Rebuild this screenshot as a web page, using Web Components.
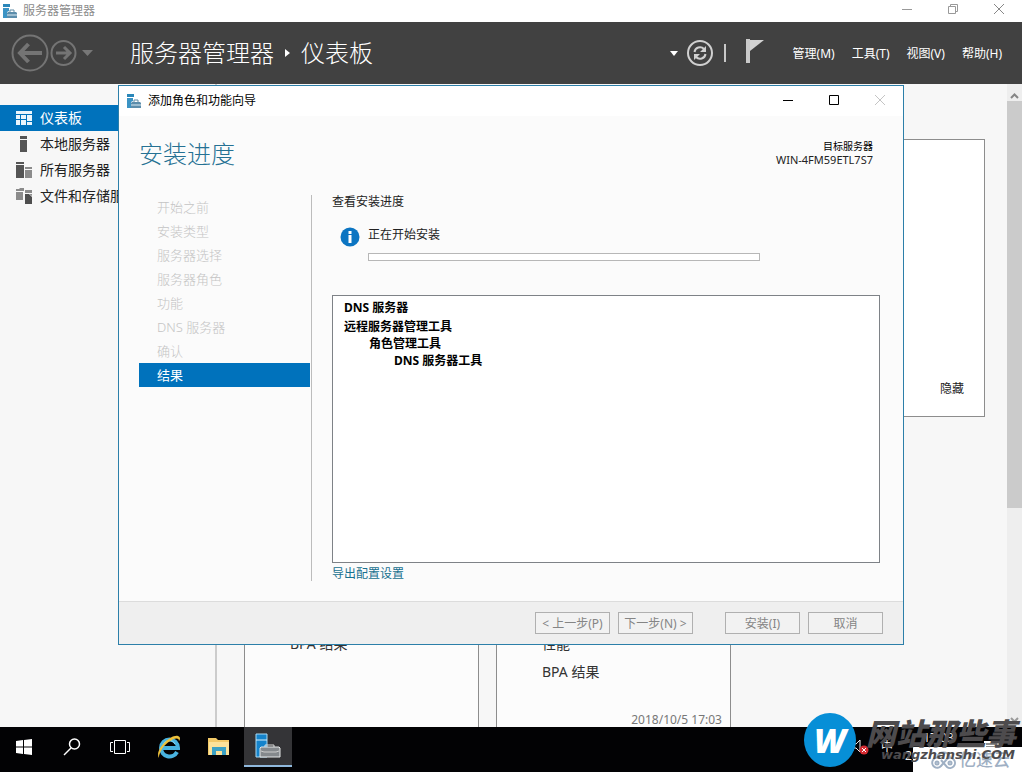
<!DOCTYPE html>
<html lang="zh-CN">
<head>
<meta charset="utf-8">
<title>服务器管理器</title>
<style>
html,body{margin:0;height:100%}
body{position:relative;display:flex;flex-direction:column;overflow:hidden;background:#f7f7f7;color:#222;font:12px/16px "Noto Sans","Noto Sans CJK SC",sans-serif}
</style>
</head>
<body>
<sm-titlebar>服务器管理器</sm-titlebar>
<sm-header></sm-header>
<sm-workspace></sm-workspace>
<sm-taskbar></sm-taskbar>
<sm-wizard></sm-wizard>
<site-mark></site-mark>
<script>
const base = `<style>:host,*{box-sizing:border-box}button{font:inherit;color:inherit;background:none;border:0;padding:0;margin:0}a{color:inherit;text-decoration:none}ul,ol{list-style:none;margin:0;padding:0}h1,h2,p{margin:0;font-weight:inherit;font-size:inherit}svg{display:block}</style>`;
function define(name, html){
  const t = document.createElement('template');
  t.innerHTML = base + html;
  customElements.define(name, class extends HTMLElement{
    constructor(){super();this.attachShadow({mode:'open'}).append(t.content.cloneNode(true));}
  });
}

define('app-glyph', `<style>:host{display:block}</style>
<svg width="15" height="15" viewBox="0 0 15 15" aria-hidden="true"><path d="M0 0h7v3H0z" fill="#2b87b9"/><path d="M0 4h6v3l-2 1v6H0z" fill="#3b93c4"/><path d="M7 8V6h4v2" fill="none" stroke="#5f8ba5"/><path d="M4 9l1-1h8l1 1v5H4z" fill="#5c8dab"/><path d="M4 11h10" stroke="#dcecf4"/></svg>`);

define('sm-titlebar', `<style>
:host{display:flex;flex:none;height:22px;align-items:center;background:#fff;color:#8c8c8c;padding-left:3px}
p{flex:1;margin-left:5px;line-height:20px}
.c{display:flex;gap:34px;padding:0 17px 4px 0}
</style><app-glyph></app-glyph><p><slot></slot></p>
<div class="c">
<button aria-label="最小化"><svg width="12" height="12"><path d="M1 6.500h10" stroke="#999"/></svg></button>
<button aria-label="还原"><svg width="12" height="12" fill="none" stroke="#999"><path d="M1.500 3.500h7v7h-7zM3.500 3.500v-2h7v7h-2"/></svg></button>
<button aria-label="关闭"><svg width="12" height="12"><path d="M1 1l10 10M11 1L1 11" stroke="#888"/></svg></button></div>`);

define('sm-header', `<style>
:host{display:flex;flex:none;height:62px;align-items:center;background:#414141;color:#fff;padding:0 20px 0 11px}
.n{display:flex;align-items:center;width:119px}
h1{display:flex;align-items:center;gap:11px;font-size:24px;line-height:32px;font-weight:300;flex:1;white-space:nowrap}
.t{display:flex;align-items:center;margin-right:29px}
nav{display:flex;gap:17px;white-space:nowrap;padding-top:2px}
.r{margin:0 11px 0 9px}.f{margin-left:20px}
</style>
<div class="n">
<button aria-label="后退"><svg width="38" height="38" fill="none" stroke="#747474"><circle cx="19" cy="19" r="17.500" stroke-width="2"/><path d="M8 19h23M17.500 10L9 19l8.500 9" stroke-width="4"/></svg></button>
<button aria-label="前进"><svg width="28" height="28" fill="none" stroke="#747474"><circle cx="14.500" cy="14" r="12" stroke-width="2"/><path d="M7 14h14M15 8l6 6-6 6" stroke-width="3"/></svg></button>
<button aria-label="历史记录"><svg width="18" height="12"><path d="M5 3h11l-5.500 6z" fill="#777"/></svg></button></div>
<h1><span>服务器管理器</span><svg width="5" height="8"><path d="M0 0l5 4-5 4z" fill="#fff"/></svg><span>仪表板</span></h1>
<div class="t"><button aria-label="更多"><svg width="8" height="5"><path d="M0 0h8L4 5z" fill="#fff"/></svg></button>
<button class="r" aria-label="刷新"><svg width="26" height="26" fill="none" stroke="#d0d0d0"><circle cx="13" cy="13" r="12" stroke-width="2"/><path d="M7.500 12a5.500 5.500 0 0 1 9.500-3M18.500 14A5.500 5.500 0 0 1 9 17" stroke-width="2"/><path d="M19 6v6h-6zM7 20v-6h6z" fill="#d0d0d0" stroke="none"/></svg></button>
<svg width="2" height="18"><path d="M1 0v18" stroke="#c8c8c8" stroke-width="2"/></svg>
<button class="f" aria-label="通知"><svg width="18" height="28"><path d="M0 0h4v24H0z" fill="#c9c9c9"/><path d="M4 1h14L4 12z" fill="#d3d3d3"/></svg></button></div>
<nav><a href="#m">管理(M)</a><a href="#t">工具(T)</a><a href="#v">视图(V)</a><a href="#h">帮助(H)</a></nav>`);

define('sm-tile', `<style>
:host{display:flex;flex-direction:column;width:235px;height:292px;border:1px solid #8d8d8d;background:#fcfcfc;padding:190px 8px 0 45px;font-size:14px;line-height:28px;color:#333}
.d{margin-top:auto;text-align:right;font-size:12px;line-height:20px;color:#777;min-height:20px}
</style><slot></slot><div class="d"><slot name="date"></slot></div>`);

define('sm-workspace', `<style>
:host{display:flex;flex:1;min-height:0;overflow:hidden}
aside{flex:none;width:217px;border-right:2px solid #ccc;padding-top:21px;font-size:14px;line-height:26px}
aside a{display:flex;align-items:center;height:26px;gap:8px;padding-left:16px}
aside a.on{background:#0072bc;color:#fff}
main{flex:1;min-width:0;padding:55px 22px 0 27px;overflow:hidden}
.w{height:278px;border:1px solid #8d8d8d;background:#fff;display:flex;align-items:flex-end;justify-content:flex-end;padding:19px 20px}
.r{display:flex;gap:17px;margin-top:22px}
.s{flex:none;width:15px;background:#eee;display:flex;flex-direction:column;align-items:center}
.s button{height:17px;padding:6px 0 0}.s i{width:15px;flex:0 0 407px;background:#cbcbcb}.s .d{margin-top:auto;height:14px;padding:3px 0}
</style>
<aside><nav>
<a class="on" href="#d"><svg width="16" height="16" fill="#eaf5fc"><path d="M0 1h16v3H0zM0 5h4v4H0zM5 5h5v4H5zM11 5h5v6h-5zM0 10h4v5H0zM5 10h5v5H5zM11 12h5v3h-5z"/></svg>仪表板</a>
<a href="#l"><svg width="16" height="16" fill="#555"><path d="M4 0h7v3H4zM4 4h7v12H4z"/></svg>本地服务器</a>
<a href="#a"><svg width="16" height="16" fill="#555"><path d="M0 0h8v2H0zM0 3h8v13H0z"/><path d="M9 5h7v2H9zM9 8h7v8H9z" fill="#8b8b8b"/></svg>所有服务器</a>
<a href="#f"><svg width="16" height="16" fill="#8b8b8b"><path d="M0 1h3l1-1h4v3H0zM0 4h7v8H0zM9 2h7v3H9z"/><path d="M9 6h4l3 3v7H9z" fill="#4e4e4e"/><path d="M13 6h3v2z"/></svg>文件和存储服务</a>
</nav></aside>
<main><div class="w"><a href="#hide">隐藏</a></div>
<div class="r"><sm-tile><span>BPA 结果</span></sm-tile><sm-tile><span>性能</span><span>BPA 结果</span><span slot="date">2018/10/5 17:03</span></sm-tile></div></main>
<div class="s"><button aria-label="向上滚动"><svg width="9" height="6" fill="none" stroke="#858585" stroke-width="2"><path d="M1 5l3.500-3.500L8 5"/></svg></button><i></i><button class="d" aria-label="向下滚动"><svg width="9" height="6" fill="none" stroke="#999" stroke-width="2"><path d="M1 1l3.500 3.500L8 1"/></svg></button></div>`);

define('sm-taskbar', `<style>
:host{display:flex;flex:none;height:45px;background:#020204;color:#fff;padding-bottom:5px;justify-content:space-between}
.a,.t{display:flex}
.a button{width:50px;display:grid;place-items:center}.a button:nth-child(-n+3){width:48px}
.a .on{width:48px;background:#343437;border-bottom:2px solid #8fb8dc}
.t{align-items:center;gap:12px;padding-right:23px;color:#eee}
.k{width:67px;text-align:center;line-height:18px}.k span{display:block}.k span+span{text-align:left}
</style>
<div class="a">
<button aria-label="开始"><svg width="16" height="16" fill="#fff"><path d="M0 2l7-1v6.500H0zM8 1l8-1v7.500H8zM0 8.500h7V15l-7-1zM8 8.500h8V16l-8-1z"/></svg></button>
<button aria-label="搜索"><svg width="18" height="18" fill="none" stroke="#fff" stroke-width="1.500"><circle cx="11.500" cy="6" r="5"/><path d="M8 10l-7 7"/></svg></button>
<button aria-label="任务视图"><svg width="20" height="16" fill="none" stroke="#fff"><path d="M4.500 1.500h11v13h-11zM3 3.500H.5v9H3M17 3.500h2.500v9H17"/></svg></button>
<button aria-label="Internet Explorer"><svg width="26" height="26" fill="none"><path d="M5 14h17A8.500 8.500 0 0 0 5 14a8.500 8.500 0 0 0 16 4" stroke="#49b3e0" stroke-width="4"/><path d="M7 11a6.500 6.500 0 0 1 12-1" stroke="#93dcf3"/><path d="M3 24C-2 17 14 0 22 2c3 1 2 4 1 5 0-7-15 2-18 10-2 4-2 5-2 7z" fill="#edc13c"/></svg></button>
<button aria-label="文件资源管理器"><svg width="22" height="20"><path d="M0 1h8l2 2h11v15H0z" fill="#f2c968"/><path d="M1 5h20v13H1z" fill="#fbe29a"/><path d="M4 18v-8h14v8h-4v-4H8v4z" fill="#3ba1c4"/></svg></button>
<button class="on" aria-label="服务器管理器"><svg width="26" height="26"><path d="M1 1h11v23H1z" fill="#1583cb" stroke="#a9daf5"/><path d="M1 7h11" stroke="#d5edf9"/><path d="M10 14V12h9v2" fill="none" stroke="#ddd"/><path d="M6 14h18l1 1v9H5v-9z" fill="#85898d" stroke="#e5e7e8"/><path d="M6 18l3 1h12l3-1" stroke="#ccc" fill="none"/></svg></button></div>
<div class="t"><button aria-label="音量"><svg width="18" height="16"><path d="M3 5h2l4-4v12l-4-4H3z" fill="none" stroke="#eee"/><circle cx="13" cy="11" r="4.500" fill="#d52b32"/><path d="M11 9l4 4M15 9l-4 4" stroke="#fff"/></svg></button><span>中</span>
<div class="k"><span>17:03</span><span>2018/10/5</span></div>
<button aria-label="操作中心"><svg width="15" height="15"><path d="M0 1h15v10H9l-3 3v-3H0z" fill="#fff"/><path d="M2 4h11M2 7h11" stroke="#222"/></svg></button></div>`);

define('wizard-steps', `<style>:host{display:block;flex:none;width:173px;border-right:1px solid #bcbcbc;padding-right:1px;font-size:13px;line-height:24px;color:#c4c4c4;font-weight:300}
li{padding-left:18px;height:24px}.on{background:#0072bc;color:#fff;font-weight:400}</style>
<ol><li>开始之前</li><li>安装类型</li><li>服务器选择</li><li>服务器角色</li><li>功能</li><li>DNS 服务器</li><li>确认</li><li class="on" aria-current="step">结果</li></ol>`);

define('sm-wizard', `<style>
:host{position:absolute;left:118px;right:118px;top:85px;bottom:127px;display:flex;flex-direction:column;border:1px solid #2c7fa9;background:#fbfbfb;color:#222}
.b{flex:none;height:30px;background:#fff;display:flex;align-items:center;padding:0 17px 0 8px;color:#000}.b p{flex:1;margin-left:6px}
.c{display:flex;gap:34px}
header{flex:none;display:flex;justify-content:space-between;height:79px;padding:22px 30px 0 20px}
h1{font-size:24px;line-height:32px;font-weight:300;color:#257193}
.g{text-align:right;font-size:11px;line-height:13px;padding-top:2px}
.g b{display:block;font-weight:400;font-size:10px;color:#000}
.m{flex:1;display:flex;min-height:0;gap:20px;padding:0 23px 20px 20px}
section{flex:1;display:flex;flex-direction:column;min-width:0}
h2{line-height:14px}
.i{display:grid;grid-template-columns:28px 1fr;margin:16px 0 34px 8px;line-height:20px}
.i svg{margin-top:2px}
progress{display:block;appearance:none;-webkit-appearance:none;width:100%;max-width:392px;height:8px;margin-top:8px;border:1px solid #b7b7b7;background:#fff}
progress::-webkit-progress-bar{background:#fff}
.l{flex:1;border:1px solid #7e8287;background:#fff;padding:3px 11px;font-weight:700;line-height:17px;color:#000;min-height:0}
.l ul{padding-left:25px}.l>li+li{margin-top:2px}
.e{color:#17708f;line-height:14px;margin-top:4px}
footer{flex:none;height:43px;border-top:1px solid #dcdcdc;background:#efefef;display:flex;justify-content:flex-end;align-items:center;gap:8px;padding-right:20px}
footer button{width:75px;height:22px;border:1px solid #b0b0b0;background:#f2f2f2;color:#858585;line-height:18px;padding-top:2px;white-space:nowrap}
.x{margin-left:24px}
</style>
<div class="b"><app-glyph></app-glyph><p>添加角色和功能向导</p><div class="c">
<button aria-label="最小化"><svg width="12" height="12"><path d="M1 5.500h10" stroke="#000"/></svg></button>
<button aria-label="最大化"><svg width="12" height="12"><path d="M1.500.5h9v9h-9z" fill="none" stroke="#000"/></svg></button>
<button aria-label="关闭"><svg width="12" height="12"><path d="M1 0l10 10M11 0L1 10" stroke="#c4c4c4"/></svg></button></div></div>
<header><h1>安装进度</h1><div class="g"><b>目标服务器</b>WIN-4FM59ETL7S7</div></header>
<div class="m"><wizard-steps></wizard-steps>
<section><h2>查看安装进度</h2>
<div class="i"><svg width="20" height="20"><circle cx="10" cy="10" r="9.500" fill="#0c75c2"/><path d="M8.500 4h3v3h-3zM8.500 8h3v8h-3z" fill="#fff"/></svg><div><label for="p">正在开始安装</label><progress id="p" value="0" max="100"></progress></div></div>
<ul class="l"><li>DNS 服务器</li><li>远程服务器管理工具<ul><li>角色管理工具<ul><li>DNS 服务器工具</li></ul></li></ul></li></ul>
<a class="e" href="#export">导出配置设置</a></section></div>
<footer><button disabled>&lt; 上一步(P)</button><button disabled>下一步(N) &gt;</button><button class="x" disabled>安装(I)</button><button disabled>取消</button></footer>`);

define('site-mark', `<style>
:host{position:absolute;right:0;bottom:0;width:218px;height:60px}
.y{position:absolute;right:0;bottom:0;width:109px;height:25px;background:#fff;color:#9fb0c4;font-size:17px;line-height:25px;font-weight:500;display:flex;align-items:center;gap:2px;padding-left:17px}
.o{position:absolute;left:0;top:1px;width:52px;height:54px;border-radius:50%;background:#078fd7;color:#fff;font:italic 800 34px/54px "Open Sans",sans-serif;text-align:center}
.n{position:absolute;right:6px;top:8px;font-style:italic;font-weight:900;font-size:30px;line-height:28px;color:#4d4b4d;white-space:nowrap}
.u{position:absolute;right:7px;top:35px;font:italic 700 13px/16px "DejaVu Sans",sans-serif;color:#4d4b4d;white-space:nowrap}
</style>
<div class="y"><svg width="27" height="20" fill="none" stroke="#9fb0c4" stroke-width="2"><path d="M9 8a5 5 0 1 0 2 8l6-7a5 5 0 1 1 0 8l-6-7M7 7a7 7 0 0 1 13 0"/><circle cx="7" cy="13" r="1.500"/><circle cx="20" cy="13" r="1.500"/></svg><span>亿速云</span></div>
<div class="o">W</div><div class="n">网站那些事</div><div class="u">wangzhanshi.COM</div>`);
</script>
</body>
</html>
